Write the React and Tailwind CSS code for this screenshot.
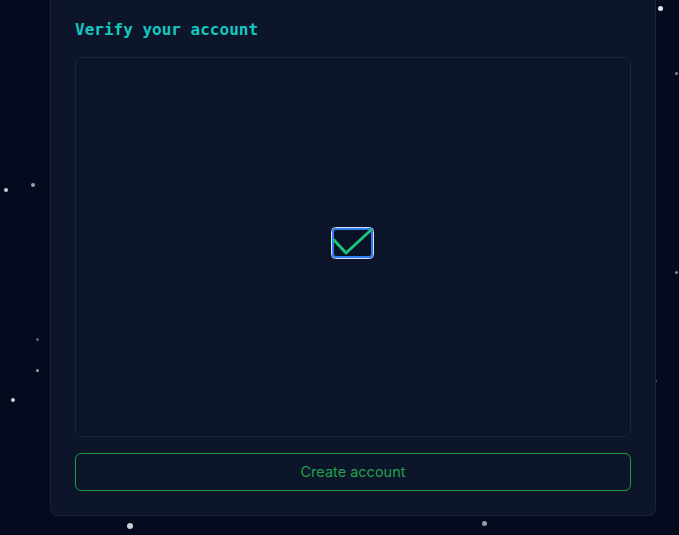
import React from 'react';

const stars = [
    { x: 660, y: 8, s: 5, o: 0.9 },
    { x: 676, y: 73, s: 3, o: 0.5 },
    { x: 6, y: 190, s: 4, o: 0.8 },
    { x: 33, y: 185, s: 4, o: 0.6 },
    { x: 37, y: 339, s: 3, o: 0.35 },
    { x: 37, y: 370, s: 3, o: 0.6 },
    { x: 13, y: 400, s: 4, o: 0.8 },
    { x: 676, y: 272, s: 3, o: 0.5 },
    { x: 656, y: 381, s: 2, o: 0.4 },
    { x: 130, y: 526, s: 6, o: 0.8 },
    { x: 484, y: 523, s: 5, o: 0.6 },
];

const CheckIcon = () => (
    <svg width="43" height="32" viewBox="0 0 43 32" fill="none">
        <rect x="0.5" y="0.5" width="42" height="31" rx="4" fill="#0a1326" stroke="#cfe3ff" strokeWidth="1" />
        <rect x="2" y="2" width="39" height="28" rx="3" fill="#0a1326" stroke="#2f7cf0" strokeWidth="2" />
        <path d="M3 13 L15 26 L40 3" stroke="#1fc27a" strokeWidth="3" strokeLinecap="round" strokeLinejoin="round" />
    </svg>
);

const App = () => {
    return (
        <div className="relative w-[679px] h-[535px] overflow-hidden bg-[#050b1f]">
            {stars.map((star, i) => (
                <span
                    key={i}
                    className="absolute rounded-full bg-white blur-[0.5px]"
                    style={{ left: star.x - star.s / 2, top: star.y - star.s / 2, width: star.s, height: star.s, opacity: star.o }}
                />
            ))}
            <div className="relative ml-[50px] w-[606px] bg-[#0c1529] border-x border-b border-[#1a2436] rounded-b-lg px-6 pt-[18px] pb-6">
                <h2 className="text-[16px] leading-6 font-bold text-[#14c7c0] mb-[15px]" style={{ fontFamily: '"DejaVu Sans Mono", monospace' }}>
                    Verify your account
                </h2>
                <div className="h-[380px] rounded-lg border border-[#1c2639] bg-[#0b1428] flex items-center justify-center">
                    <div className="mr-[1px] mb-[8px]">
                        <CheckIcon />
                    </div>
                </div>
                <button
                    className="mt-4 w-full h-[38px] rounded-md border border-[#1f9a45] text-[#22a04b] text-[14.5px] flex items-center justify-center"
                    style={{ fontFamily: 'Inter, "Noto Sans", sans-serif' }}
                >
                    Create account
                </button>
            </div>
        </div>
    );
};

export default App;
